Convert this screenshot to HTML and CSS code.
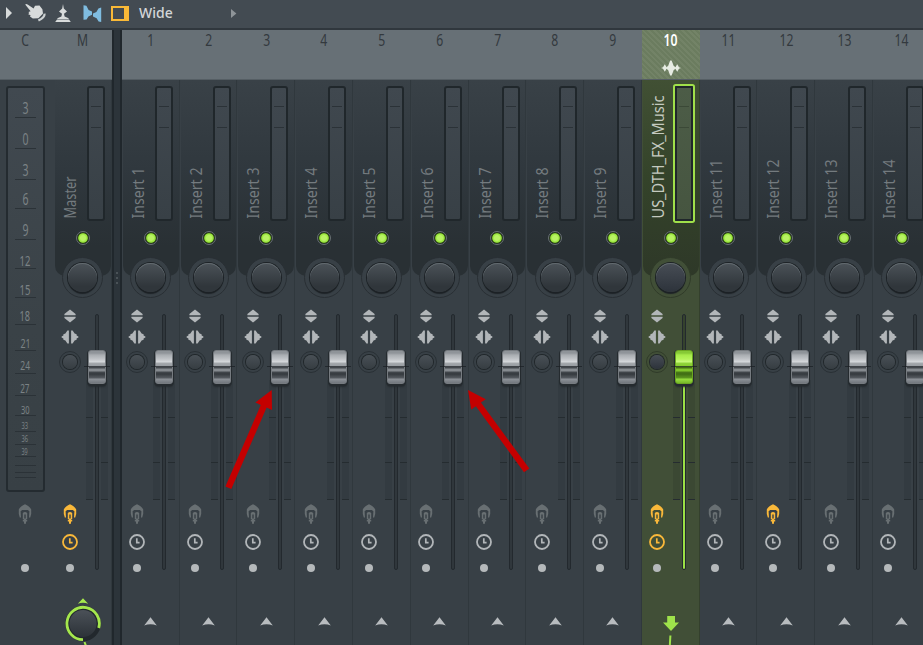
FILE: index.html
```html
<!DOCTYPE html>
<html lang="en">

<head>
    <meta charset="UTF-8">
    <meta name="viewport" content="width=device-width, initial-scale=1">
    <title>Mixer</title>
    <link rel="stylesheet" href="styles.css">
</head>

<body>
    <!-- icons -->
    <svg class="sprite" width="0" height="0">
        <symbol id="updown" viewBox="0 0 12 14">
            <path d="M6 0.4L11.6 5V6.2H0.4V5zM6 13.6L11.6 9V7.8H0.4V9z" />
        </symbol>
        <symbol id="leftright" viewBox="0 0 18 14">
            <path d="M7.9 0.4V13.6H6.4L4.4 10.4L2.4 9.8V8.4L0.6 7.6V6.4L2.4 5.6V4.2L4.4 3.6L6.4 0.4zM10.1 0.4V13.6H11.6L13.6 10.4L15.6 9.8V8.4L17.4 7.6V6.4L15.6 5.6V4.2L13.6 3.6L11.6 0.4z" />
        </symbol>
        <symbol id="plug" viewBox="0 0 14 20">
            <path d="M7 0.3C9.5 1.5 12.5 3.5 13.2 5.5V10L12.2 13.5H11L11.4 7.2L9.8 6H4.2L2.6 7.2L3 13.5H1.8L0.8 10V5.5C1.5 3.5 4.5 1.5 7 0.3z" />
            <path d="M4.8 9Q7 6.8 9.2 9V15.2H8.2V16H9.2V17.5H8V19.7H6V17.5H4.8V16H5.8V15.2H4.8zM6.3 10.5V14.5H7.7V10.5z" fill-rule="evenodd" />
        </symbol>
        <symbol id="clock" viewBox="0 0 16 16">
            <circle cx="8" cy="8" r="7" fill="none" stroke="currentColor" stroke-width="1.8" />
            <path d="M7.8 4.3V8.6H10.6" fill="none" stroke="currentColor" stroke-width="1.7" />
        </symbol>
        <symbol id="chevron" viewBox="0 0 13 9">
            <path d="M6.5 0.2L12.8 8.4Q6.5 6.2 0.2 8.4z" />
        </symbol>
        <symbol id="route" viewBox="0 0 16 30">
            <path d="M4.2 0H12V6.6H16L8 15L0 6.6H4.2z" />
            <path d="M7.4 19.5L6.8 30" stroke="currentColor" stroke-width="2" />
        </symbol>
        <symbol id="wave" viewBox="0 0 20 16">
            <path d="M0 8L2 7.2L3.8 4.2L5.6 7.2L7.2 5.8L8.2 3L9.2 0.5H10.6L11.6 3L12.6 5.8L14.4 7.2L16.2 4.2L18 7.2L20 8L18 8.8L16.2 11.8L14.4 8.8L12.6 10.2L11.6 13L10.6 15.5H9.2L8.2 13L7.2 10.2L5.6 8.8L3.8 11.8L2 8.8z" />
        </symbol>
    </svg>

    <header class="toolbar">
        <svg class="tool-play" width="6" height="12" viewBox="0 0 6 12"><path d="M0 0L6 6L0 12z" /></svg>
        <svg class="tool-hand" width="21" height="18" viewBox="0 0 21 18">
            <path d="M0.2 0.6Q1.2 -0.4 2.6 0.6L8.6 4.4L10 1.8L14.5 1.6L17.4 5.2L18 9.6L13.4 14.2L7.8 14.4L5 12.4L5.6 11.2L3.2 10.2L4.2 9L3.4 8L5.6 7.2z" />
            <path d="M19.6 9.6Q19.8 13.6 13.4 16.6" fill="none" stroke="#ccd1d2" stroke-width="2.2" />
        </svg>
        <svg class="tool-stand" width="16" height="18" viewBox="0 0 16 18">
            <path d="M8 0L8.8 4.6L12 7.6L9 9.8L9.6 12.6L13.6 14.2V15H2.4V14.2L6.4 12.6L7 9.8L4 7.6L7.2 4.6zM0.2 18L2 15.4H14L15.8 18z" />
        </svg>
        <svg class="tool-link" width="19" height="17" viewBox="0 0 19 17">
            <path d="M0.5 0.3L3.4 0.8L5.6 5L9 6.6V9.8L5.4 11.4L3.6 14.4L0.5 14.8z" />
            <path d="M18.2 2.6V17L15.6 16.4L13.6 13.2L10 11.4V8.6L13.4 7L15.4 3.6z" />
        </svg>
        <span class="tool-view"></span>
        <span class="tool-name">Wide</span>
        <svg class="tool-more" width="6" height="9" viewBox="0 0 6 9"><path d="M0 0L5.4 4.5L0 9z" /></svg>
    </header>

    <main class="mixer">
        <section class="current">
            <div class="head"><span class="num">C</span></div>
            <div class="scale" id="scale"></div>
            <svg class="icon plug" width="14" height="20"><use href="#plug" /></svg>
            <span class="dot"></span>
        </section>
        <div id="master" class="group"></div>
        <div class="splitter"><i></i><i></i><i></i></div>
        <div id="inserts" class="group"></div>
    </main>

    <!-- pointers to the faders -->
    <svg class="pointers" width="923" height="645" viewBox="0 0 923 645">
        <path d="M271.7 390L272 410L266.6 407.6L231.3 489L225.4 486.5L260.8 405L255.4 402.6z" />
        <path d="M468 390L485.8 399.2L480.9 402.6L529.3 468.6L524 472.3L475.9 406.2L471.2 409.6z" />
    </svg>

    <script src="script.js"></script>
</body>

</html>
```

FILE: styles.css
```css
* {
    box-sizing: border-box;
}

body {
    margin: 0;
    height: 645px;
    overflow: hidden;
    background: #384046;
    font-family: "Noto Sans", "Open Sans", sans-serif;
}

.sprite {
    position: absolute;
}

svg {
    display: block;
    flex-shrink: 0;
    fill: currentColor;
}

/* toolbar */
.toolbar {
    display: flex;
    align-items: center;
    height: 30px;
    padding: 0 0 2px 6px;
    background: #434b52;
    border-bottom: 2px solid #30373d;
    color: #d8dbdb;
}

.tool-play {
    margin-right: 13px;
}

.tool-hand {
    margin-right: 9px;
}

.tool-stand {
    margin-right: 12px;
}

.tool-link {
    margin-right: 9px;
    color: #7fbce0;
}

.tool-view {
    width: 18px;
    height: 15px;
    margin-right: 10px;
    border: 2px solid #f9b937;
    border-right-width: 5px;
}

.tool-name {
    width: 92px;
    font-size: 14px;
    font-weight: 500;
    line-height: 18px;
    color: #d3d6d8;
}

.tool-more {
    color: #8e9498;
}

/* columns */
.mixer {
    display: flex;
    height: 615px;
}

.group {
    display: flex;
    flex-shrink: 0;
}

.head {
    display: flex;
    flex-direction: column;
    align-items: center;
    flex-shrink: 0;
    width: 100%;
    height: 50px;
    background: #677076;
    border-bottom: 1px solid #555e64;
    color: #33393e;
}

.num {
    height: 21px;
    font-size: 16.5px;
    line-height: 20px;
    transform: scaleX(0.74);
}

.head svg {
    margin-top: 9px;
    color: #e6ebe2;
}

.current {
    display: flex;
    flex-direction: column;
    align-items: center;
    flex-shrink: 0;
    width: 54px;
}

.current .head {
    padding-right: 4px;
}

.current .icon,
.current .dot {
    margin-right: 4px;
}

.current .dot {
    margin-top: 40px;
}

/* db scale */
.scale {
    width: 39px;
    height: 406px;
    margin: 6px 4px 12px 0;
    padding: 0 7px;
    border: 2px solid #242b30;
    border-radius: 3px;
    background: linear-gradient(#414950, #3a4247 60%, #384045);
}

.mark {
    display: flex;
    align-items: flex-end;
    justify-content: center;
    border-bottom: 1px solid #2b3237;
    color: #7b8285;
}

.mark span {
    padding-bottom: 0.5px;
    line-height: 1;
    transform: scaleX(0.68);
}

.splitter {
    display: flex;
    flex-direction: column;
    align-items: center;
    flex-shrink: 0;
    gap: 3px;
    width: 10.2px;
    padding-top: 242px;
    background: #2c343a;
    border-left: 2px solid #20272c;
    border-right: 2px solid #20272c;
}

.splitter i {
    width: 2px;
    height: 2px;
    background: #4a5257;
}

/* track */
.track {
    display: flex;
    flex-direction: column;
    flex-shrink: 0;
    width: 57.77px;
    height: 615px;
}

.strip {
    flex-grow: 1;
    padding-left: 1px;
    background: #384046;
    border-right: 1px solid #30383d;
}

.strip-top {
    display: flex;
    flex-direction: column;
    align-items: center;
    height: 196px;
    padding-top: 6px;
    border-radius: 0 0 10px 10px;
    background: linear-gradient(#394147, #30383e 45%, #293034 85%);
}

.name-row {
    display: flex;
    width: 100%;
    height: 135px;
}

.name {
    overflow: visible;
    font-size: 16px;
    color: #747b7f;
}

.meter {
    display: flex;
    flex-direction: column;
    gap: 20px;
    width: 18px;
    padding: 18px 2px 0;
    border: 2px solid #20272b;
    border-radius: 3px;
    background: linear-gradient(#40484f, #384046);
}

.meter i {
    height: 1px;
    background: #2b3237;
}

.led {
    flex-shrink: 0;
    width: 14px;
    height: 14px;
    margin-top: 10px;
    border: 1px solid #697174;
    border-radius: 50%;
    background: radial-gradient(circle, #b8f263 0 2.5px, #94e238 4.3px, #2c4413 5.2px, #20282a 6px);
}

.pan {
    flex-shrink: 0;
    width: 41px;
    height: 41px;
    margin-top: 12px;
    padding: 5px;
    border: 1px solid #292f34;
    border-radius: 50%;
    background: #384046;
}

.pan::before {
    content: "";
    display: block;
    width: 29px;
    height: 29px;
    border-radius: 50%;
    background: linear-gradient(#4b5258, #30363b 80%);
    box-shadow: 0 0 0 1px #1d2226, 0 2px 1px #1d2226, inset 0 1px 0 #626a6f;
}

.controls {
    display: flex;
    height: 276px;
    margin-top: 21px;
}

.buttons {
    display: flex;
    flex-direction: column;
    align-items: center;
    width: 29px;
    padding-top: 12px;
    color: #b2b6b9;
}

.leftright {
    margin-top: 7px;
}

.stereo {
    flex-shrink: 0;
    width: 22px;
    height: 22px;
    margin: 7px 0 131px;
    padding: 3px;
    border: 1px solid #293035;
    border-radius: 50%;
}

.stereo::before {
    content: "";
    display: block;
    width: 14px;
    height: 14px;
    border-radius: 50%;
    background: linear-gradient(#495056, #363d42);
    box-shadow: 0 0 0 1px #20262a;
}

.plug {
    color: #686f72;
}

.clock {
    margin: 10px 0 14px;
}

.dot {
    width: 8px;
    height: 8px;
    border-radius: 50%;
    background: #b5b9bb;
}

.lit {
    color: #f9b83a;
}

/* fader */
.fader {
    position: relative;
    display: flex;
    justify-content: space-between;
    width: 22px;
    height: 256px;
    margin: 17px 0 0 1.5px;
}

.wing {
    width: 7px;
    height: 120px;
    margin-top: 66px;
    padding-top: 37px;
    background: #333b41;
    border-bottom: 1px solid #252c30;
}

.wing i {
    display: block;
    height: 46px;
    border-top: 1px solid #252c30;
    border-bottom: 1px solid #252c30;
}

.slot {
    width: 4px;
    height: 256px;
    border: 1px solid #23292e;
    border-radius: 2px;
    background: #30373c;
}

.cap {
    position: absolute;
    top: 36px;
    left: 2px;
    width: 18px;
    height: 34px;
    border: 1px solid #767b80;
    border-radius: 3px;
    background: linear-gradient(#8f9499 0 2px, #a9adb1 4px, #c0c3c7 8px, #d7dadd 11px, #a5a9ad 12px, #94999e 16px, #43484d 16px 17px, #858a8f 18px 20px, #44494e 21px, #34393e 23px, #565b61 27px, #8d9298 28px, #72777d);
    box-shadow: 0 1px 0 1px #252b2f, 0 3px 2px #252b2f;
}

.cap::after {
    content: "";
    position: absolute;
    top: 15px;
    left: -5px;
    width: 26px;
    height: 1px;
    background: rgba(25, 30, 34, 0.7);
}

.foot {
    display: flex;
    justify-content: center;
    padding-top: 44px;
    color: #b8bcbf;
}

/* send knob under the master */
.send {
    padding-top: 24px;
}

/* selected track */
.selected .head {
    background: repeating-linear-gradient(45deg, #6b7c5f 0 2px, #738367 2px 4px);
    color: #fff;
}

.selected .num {
    font-weight: 600;
}

.selected .strip {
    background: #414f37;
    border-color: #34402d;
}

.selected .strip-top {
    background: linear-gradient(#415034, #34432a 50%, #2e3828);
}

.selected .name {
    color: #c5cac0;
}

.selected .meter {
    border-radius: 1px;
    background: linear-gradient(#4c5c47, #465540);
    box-shadow: 0 0 0 2px #a0e04a;
}

.selected .meter i {
    background: #3b4937;
}

.selected .pan {
    background: #414f37;
    border-color: #303b29;
}

.selected .pan::before,
.selected .stereo::before {
    background: linear-gradient(#474d55, #2d333b);
}

.selected .stereo {
    border-color: #303b29;
}

.selected .wing {
    background: #3b4833;
}

.selected .slot {
    background: linear-gradient(#35422d 60px, #9be045 60px);
}

.selected .cap {
    border-color: #6ba721;
    background: linear-gradient(#86c936 0 2px, #a6ea4a 4px, #b5f35b 8px, #cbfa80 11px, #91d63a 12px, #83c82f 16px, #426d13 16px 17px, #80c52c 18px 20px, #4b7c19 21px, #3f6d14 23px, #5e9821 27px, #97df3e 28px, #79b92a);
}

.selected .foot {
    padding-top: 43px;
    color: #9fe24b;
}

.pointers {
    position: absolute;
    top: 0;
    left: 0;
    color: #c40000;
    pointer-events: none;
}
```

FILE: script.js
```js
// [label, line position, font size]
const marks = [
    ['3', 117, 15.5], ['0', 148, 15.5], ['3', 179, 15.5], ['6', 208, 15.5], ['9', 239, 15.5],
    ['12', 268, 14], ['15', 297, 14], ['18', 324, 13.5], ['21', 350, 13], ['24', 373, 12.5],
    ['27', 395, 12], ['30', 415, 11], ['33', 431, 8.5], ['36', 444, 8.5], ['39', 456, 8],
    ['', 465, 0], ['', 472, 0], ['', 477, 0]
];

let top0 = 87;
let scaleHtml = '';
for (const [label, line, size] of marks) {
    scaleHtml += `<div class="mark" style="height:${line - top0}px;font-size:${size}px"><span>${label}</span></div>`;
    top0 = line;
}
document.getElementById('scale').innerHTML = scaleHtml;

function icon(name, w, h, cls = '') {
    return `<svg class="icon ${name} ${cls}" width="${w}" height="${h}"><use href="#${name}"/></svg>`;
}

const sendKnob = `
    <svg width="38" height="49" viewBox="0 0 38 49">
        <defs><linearGradient id="k" x2="0" y2="1"><stop stop-color="#4b5158"/><stop offset="1" stop-color="#2c3238"/></linearGradient></defs>
        <path d="M19 1.2L24.2 6.8Q19 4.8 13.8 6.8z" fill="#a5e74d"/>
        <circle cx="19" cy="26.5" r="17.8" fill="#22282d"/>
        <path d="M19 42.7A16.2 16.2 0 1 1 34.7 31" fill="none" stroke="#a5e74d" stroke-width="2.8"/>
        <circle cx="19" cy="26.5" r="13.6" fill="url(#k)"/>
        <path d="M20.5 45L22 49" stroke="#a5e74d" stroke-width="2"/>
    </svg>`;

function track(num, name, length, opt = {}) {
    let foot = icon('chevron', 13, 9);
    if (opt.master) foot = sendKnob;
    if (opt.selected) foot = icon('route', 16, 30);
    return `
    <section class="track ${opt.selected ? 'selected' : ''}">
        <div class="head"><span class="num">${num}</span>${opt.selected ? icon('wave', 20, 16) : ''}</div>
        <div class="strip">
            <div class="strip-top">
                <div class="name-row">
                    <svg class="name" width="32" height="135">
                        <text transform="translate(21 132.5) rotate(-90)" textLength="${length}" lengthAdjust="spacingAndGlyphs">${name}</text>
                    </svg>
                    <div class="meter"><i></i><i></i></div>
                </div>
                <span class="led"></span>
                <div class="pan"></div>
            </div>
            <div class="controls">
                <div class="buttons">
                    ${icon('updown', 12, 14)}
                    ${icon('leftright', 18, 14)}
                    <div class="stereo"></div>
                    ${icon('plug', 14, 20, opt.plug ? 'lit' : '')}
                    ${icon('clock', 16, 16, opt.clock ? 'lit' : '')}
                    <span class="dot"></span>
                </div>
                <div class="fader">
                    <div class="wing"><i></i></div>
                    <div class="slot"></div>
                    <div class="wing"><i></i></div>
                    <div class="cap"></div>
                </div>
            </div>
            <div class="foot ${opt.master ? 'send' : ''}">${foot}</div>
        </div>
    </section>`;
}

document.getElementById('master').innerHTML = track('M', 'Master', 42, { master: true, plug: true, clock: true });

let inserts = '';
for (let i = 1; i <= 14; i++) {
    if (i == 10) {
        inserts += track(i, 'US_DTH_FX_Music', 123, { selected: true, plug: true, clock: true });
    } else {
        inserts += track(i, 'Insert ' + i, i < 10 ? 51 : 59, { plug: i == 12 });
    }
}
document.getElementById('inserts').innerHTML = inserts;
```
